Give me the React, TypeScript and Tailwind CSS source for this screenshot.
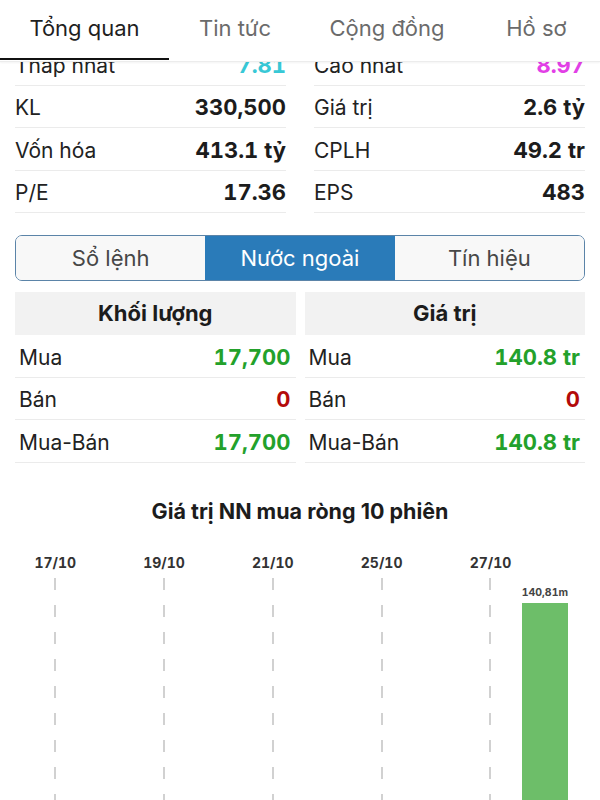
import React from 'react';

const tabs = [
  { name: 'Tổng quan', w: 'w-[169px]' },
  { name: 'Tin tức', w: 'w-[132px]' },
  { name: 'Cộng đồng', w: 'w-[172px]' },
  { name: 'Hồ sơ', w: 'w-[127px]' },
];

const stats: { left: [string, string, string?]; right: [string, string, string?] }[] = [
  { left: ['Thấp nhất', '7.81', 'text-[#38c8d6]'], right: ['Cao nhất', '8.97', 'text-[#e23fe6]'] },
  { left: ['KL', '330,500'], right: ['Giá trị', '2.6 tỷ'] },
  { left: ['Vốn hóa', '413.1 tỷ'], right: ['CPLH', '49.2 tr'] },
  { left: ['P/E', '17.36'], right: ['EPS', '483'] },
];

const flows = [
  { label: 'Mua', vol: '17,700', val: '140.8 tr', color: 'text-[#23a12b]' },
  { label: 'Bán', vol: '0', val: '0', color: 'text-[#b30a0a]' },
  { label: 'Mua-Bán', vol: '17,700', val: '140.8 tr', color: 'text-[#23a12b]' },
];

const days = ['17/10', '', '19/10', '', '21/10', '', '25/10', '', '27/10', ''];

const StatCell = ({ cell }: { cell: [string, string, string?] }) => (
  <div className="flex h-[42.5px] items-center justify-between border-b border-[#ebebeb] pt-[3px]">
    <span className="text-[21px] text-[#222]">{cell[0]}</span>
    <span className={`text-[22px] font-bold tabular-nums ${cell[2] ?? 'text-[#1c1c1c]'}`}>{cell[1]}</span>
  </div>
);

const Dashes = () => (
  <svg width="2" height="240" className="mt-[5px]">
    <line x1="1" y1="0" x2="1" y2="240" stroke="#b3b3b3" strokeWidth="1.2" strokeDasharray="12 15" />
  </svg>
);

export default function App() {
  return (
    <div className="h-[800px] w-[600px] overflow-hidden bg-white font-['Inter',sans-serif]">
      {/* top tabs */}
      <div className="relative flex h-[62px] border-b border-[#ececec] shadow-[0_1px_2px_rgba(0,0,0,0.05)]">
        {tabs.map((t, i) => (
          <div
            key={t.name}
            className={`flex ${t.w} items-center justify-center pb-[4px] text-[22px] ${
              i === 0 ? 'text-[#1f1f1f]' : 'text-[#6b6b6b]'
            }`}
          >
            {t.name}
          </div>
        ))}
        <div className="absolute bottom-[1px] left-0 h-[2px] w-[169px] bg-[#111]" />
      </div>

      {/* stats */}
      <div className="overflow-hidden">
        <div className="-mt-[19px] grid grid-cols-2 gap-x-[28px] px-[15px]">
          {stats.map((r, i) => (
            <React.Fragment key={i}>
              <StatCell cell={r.left} />
              <StatCell cell={r.right} />
            </React.Fragment>
          ))}
        </div>
      </div>

      {/* segmented control */}
      <div className="mx-[15px] mt-[22px] flex h-[46px] overflow-hidden rounded-[7px] border border-[#5b84a8] text-[22px]">
        <div className="flex flex-1 items-center justify-center bg-[#f8f8f8] text-[#474747]">Sổ lệnh</div>
        <div className="flex flex-1 items-center justify-center bg-[#2a7bb9] text-white">Nước ngoài</div>
        <div className="flex flex-1 items-center justify-center bg-[#f8f8f8] text-[#474747]">Tín hiệu</div>
      </div>

      {/* foreign flow table */}
      <div className="mt-[11px] grid grid-cols-2 gap-x-[9px] px-[15px]">
        <div className="flex h-[43px] items-center justify-center bg-[#f2f2f2] text-[22px] font-bold text-[#1c1c1c]">
          Khối lượng
        </div>
        <div className="flex h-[43px] items-center justify-center bg-[#f2f2f2] text-[22px] font-bold text-[#1c1c1c]">
          Giá trị
        </div>
        {flows.map((f) => (
          <React.Fragment key={f.label}>
            <div className="flex h-[42.5px] items-center justify-between border-b border-[#ebebeb] pl-[4px] pr-[5px] pt-[3px]">
              <span className="text-[21px] text-[#222]">{f.label}</span>
              <span className={`text-[22px] font-bold tabular-nums ${f.color}`}>{f.vol}</span>
            </div>
            <div className="flex h-[42.5px] items-center justify-between border-b border-[#ebebeb] pl-[4px] pr-[5px] pt-[3px]">
              <span className="text-[21px] text-[#222]">{f.label}</span>
              <span className={`text-[22px] font-bold tabular-nums ${f.color}`}>{f.val}</span>
            </div>
          </React.Fragment>
        ))}
      </div>

      {/* chart */}
      <div className="mt-[34px] text-center text-[21.5px] font-bold leading-[28px] text-[#1c1c1c]">
        Giá trị NN mua ròng 10 phiên
      </div>
      <div className="mt-[28px] flex px-[28px]">
        {days.map((d, i) => (
          <div key={i} className="flex flex-1 flex-col items-center">
            <div className="h-[20px] text-[14px] font-bold leading-[20px] tabular-nums text-[#333]">{d}</div>
            {d && <Dashes />}
            {i === 9 && (
              <>
                <div className="mt-[14px] text-[10.5px] font-bold leading-[12px] tabular-nums text-[#444]">140,81m</div>
                <div className="mt-[4px] h-[220px] w-[46px] bg-[#6dbe69]" />
              </>
            )}
          </div>
        ))}
      </div>
    </div>
  );
}
